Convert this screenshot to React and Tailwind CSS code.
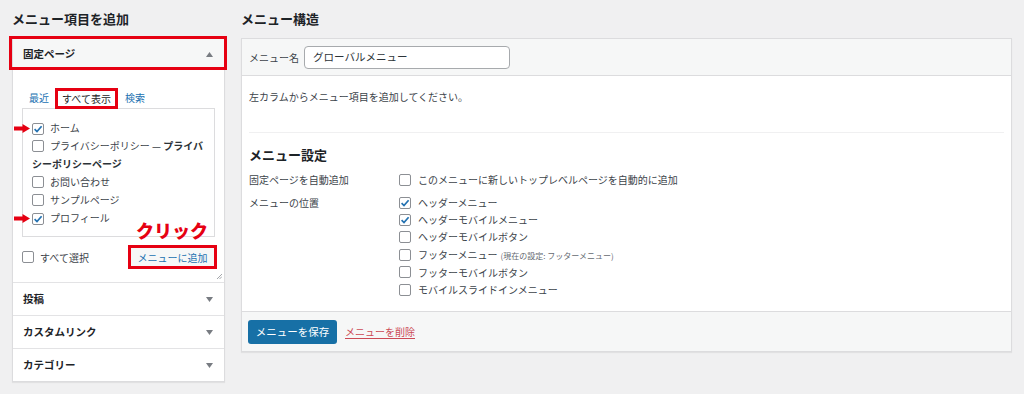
import React from 'react';

const RED = '#e60012';

const Check = ({ checked }) => (
  <span className="inline-flex w-[12px] h-[12px] align-[-2px] items-center justify-center rounded-[2px] border border-[#8c8f94] bg-white shrink-0">
    {checked && (
      <svg width="10" height="10" viewBox="0 0 10 10">
        <path d="M1.6 5.1 L4 7.5 L8.6 2.2" fill="none" stroke="#2271b1" strokeWidth="1.7" />
      </svg>
    )}
  </span>
);

const Arrow = () => (
  <svg className="absolute left-[-18px] top-[5px]" width="16" height="9" viewBox="0 0 16 9">
    <path d="M0 2.6 H8.5 V0 L16 4.5 L8.5 9 V6.4 H0 Z" fill={RED} />
  </svg>
);

const Tri = ({ up }) => (
  <svg width="7" height="5" viewBox="0 0 7 5">
    <path d={up ? 'M0 5 L3.5 0 L7 5 Z' : 'M0 0 L7 0 L3.5 5 Z'} fill="#787c82" />
  </svg>
);

const pages = [
  { label: 'ホーム', checked: true, arrow: true },
  {
    label: (
      <>
        プライバシーポリシー — <b className="font-bold text-[#2c3338]">プライバシーポリシーページ</b>
      </>
    ),
  },
  { label: 'お問い合わせ' },
  { label: 'サンプルページ' },
  { label: 'プロフィール', checked: true, arrow: true },
];

const locations = [
  { label: 'ヘッダーメニュー', checked: true },
  { label: 'ヘッダーモバイルメニュー', checked: true },
  { label: 'ヘッダーモバイルボタン' },
  { label: 'フッターメニュー', note: '(現在の設定: フッターメニュー)' },
  { label: 'フッターモバイルボタン' },
  { label: 'モバイルスライドインメニュー' },
];

const sections = ['投稿', 'カスタムリンク', 'カテゴリー'];

export default function App() {
  return (
    <div className="min-h-screen bg-[#f0f0f1] font-['Noto_Sans_CJK_JP','Noto_Sans',sans-serif] text-[#3c434a] text-[10px] flex gap-[16px] pl-[12px] pt-[10px]">
      {/* 左カラム */}
      <div className="w-[213px] shrink-0">
        <h2 className="text-[13px] leading-[18px] font-bold text-[#1d2327]">メニュー項目を追加</h2>
        <div className="mt-[9px] border border-[#dcdcde] bg-white shadow-[0_1px_1px_rgba(0,0,0,0.06)]">
          <div className="relative h-[32px] flex items-center justify-between pl-[10px] pr-[11px] bg-[#f6f7f7]">
            <span className="text-[10.5px] font-bold text-[#1d2327]">固定ページ</span>
            <Tri up />
            <div className="absolute -left-[4px] -right-[3px] -top-[2px] bottom-0 border-[3px] border-[#e60012]" />
          </div>
          <div className="relative px-[9px] pt-[18px] pb-[13px]">
            <div className="flex items-end ml-[7px] -mb-px h-[21px] leading-none">
              <span className="text-[#2271b1] mb-[6px]">最近</span>
              <span className="ml-[6px] h-[21px] px-[4px] flex items-center border-[3px] border-[#e60012] bg-white text-[#1d2327]">すべて表示</span>
              <span className="ml-[7px] text-[#2271b1] mb-[6px]">検索</span>
            </div>
            <div className="border border-[#dcdcde] bg-white pl-[9px] pr-[9px] pt-[10px] pb-[9px]">
              {pages.map((p, i) => (
                <label key={i} className="relative block leading-[18px]">
                  {p.arrow && <Arrow />}
                  <Check checked={p.checked} />
                  <span className="ml-[6px]">{p.label}</span>
                </label>
              ))}
            </div>
            <div className="mt-[8px] flex items-center justify-between">
              <label className="flex items-center gap-[6px]">
                <Check />
                <span>すべて選択</span>
              </label>
              <div className="relative -mr-[2px]">
                <span className="absolute left-[8px] bottom-full mb-[6px] whitespace-nowrap text-[18px] leading-none font-black text-[#e60012]">
                  クリック
                </span>
                <div className="h-[24px] w-[89px] flex items-center justify-center border-[3px] border-[#e60012] bg-[#f6f7f7] text-[#2271b1]">
                  メニューに追加
                </div>
              </div>
            </div>
            <svg className="absolute right-[2px] bottom-[3px]" width="6" height="6" viewBox="0 0 6 6">
              <path d="M1 6 L6 1 M3.5 6 L6 3.5" stroke="#8c8f94" strokeWidth="0.8" />
            </svg>
          </div>
          {sections.map((s) => (
            <div key={s} className="h-[33px] border-t border-[#e3e3e5] flex items-center justify-between pl-[10px] pr-[11px]">
              <span className="text-[10.5px] font-bold text-[#1d2327]">{s}</span>
              <Tri />
            </div>
          ))}
        </div>
      </div>

      {/* 右カラム */}
      <div className="w-[771px] shrink-0">
        <h2 className="text-[13px] leading-[18px] font-bold text-[#1d2327]">メニュー構造</h2>
        <div className="mt-[10px] border border-[#dcdcde] bg-white shadow-[0_1px_1px_rgba(0,0,0,0.06)]">
          <div className="h-[37px] flex items-center px-[7px] bg-[#f6f7f7] border-b border-[#dcdcde]">
            <span className="mr-[5px]">メニュー名</span>
            <div className="w-[206px] h-[23px] flex items-center px-[8px] border border-[#a7aaad] rounded-[4px] bg-white text-[10.5px] text-[#2c3338]">
              グローバルメニュー
            </div>
          </div>
          <div className="px-[7px]">
            <p className="pt-[13px] h-[57px] border-b border-[#f0f0f1]">左カラムからメニュー項目を追加してください。</p>
            <div className="pt-[13px] pb-[13px]">
              <h3 className="text-[13px] leading-[18px] font-bold text-[#1d2327]">メニュー設定</h3>
              <div className="mt-[7px] flex leading-[17px]">
                <div className="w-[150px]">固定ページを自動追加</div>
                <label className="flex items-center gap-[7px]">
                  <Check />
                  <span>このメニューに新しいトップレベルページを自動的に追加</span>
                </label>
              </div>
              <div className="mt-[6px] flex leading-[17.2px]">
                <div className="w-[150px]">メニューの位置</div>
                <div>
                  {locations.map((l) => (
                    <label key={l.label} className="flex items-center gap-[7px]">
                      <Check checked={l.checked} />
                      <span>
                        {l.label}
                        {l.note && <span className="ml-[3px] text-[8px] text-[#646970]">{l.note}</span>}
                      </span>
                    </label>
                  ))}
                </div>
              </div>
            </div>
          </div>
          <div className="h-[40px] flex items-center gap-[8px] px-[6px] bg-[#f6f7f7] border-t border-[#dcdcde]">
            <div className="h-[24px] w-[89px] flex items-center justify-center rounded-[3px] bg-[#1770a6] text-white text-[10.5px]">
              メニューを保存
            </div>
            <span className="text-[10px] text-[#cc4a55] underline underline-offset-2">メニューを削除</span>
          </div>
        </div>
      </div>
    </div>
  );
}
